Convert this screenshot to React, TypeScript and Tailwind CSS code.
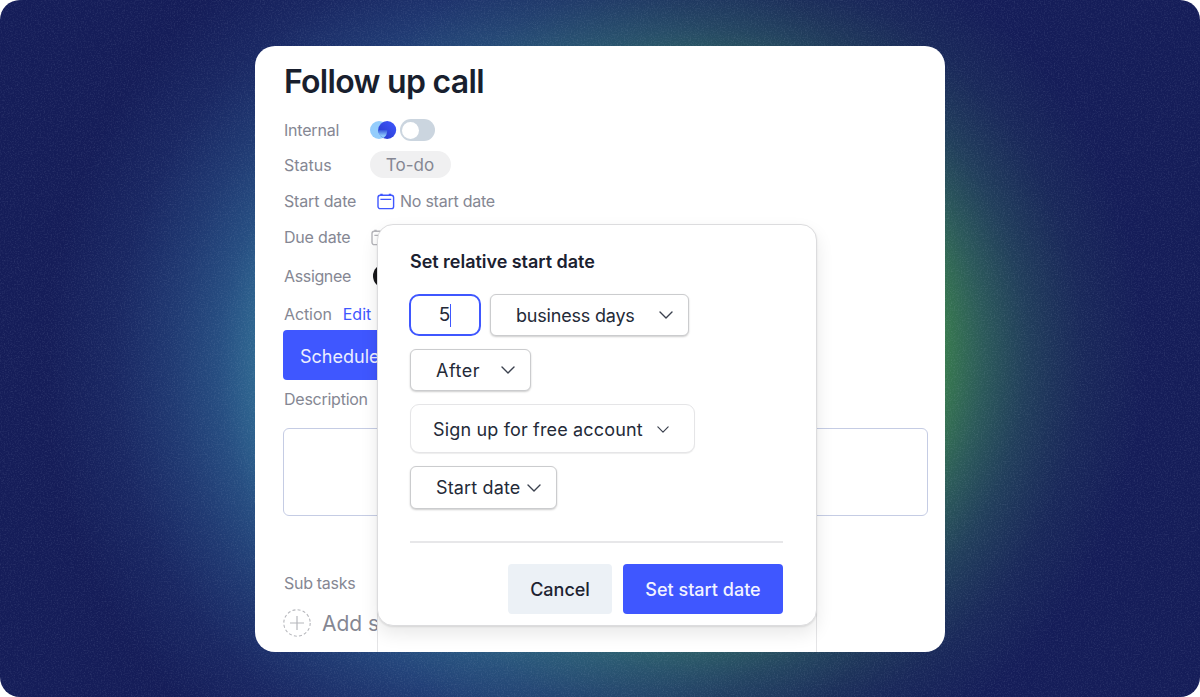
import React from 'react';

interface SelectBoxProps {
  label: string;
  className: string;
  textClass: string;
  small?: boolean;
}

const Chevron: React.FC<{ small?: boolean }> = ({ small }) => (
  <svg width={small ? 12 : 14} height={small ? 7 : 8} viewBox="0 0 14 8" fill="none" className="shrink-0">
    <path d="M1 1l6 6 6-6" stroke="#3b414e" strokeWidth="1.4" strokeLinecap="round" strokeLinejoin="round" />
  </svg>
);

const SelectBox: React.FC<SelectBoxProps> = ({ label, className, textClass, small }) => (
  <button className={`flex items-center border whitespace-nowrap bg-white text-[#242a38] ${className}`}>
    <span className={`text-left ${textClass}`}>{label}</span>
    <Chevron small={small} />
  </button>
);

const CalendarIcon: React.FC<{ color: string }> = ({ color }) => (
  <svg width="18" height="17" viewBox="0 0 18 17" fill="none" stroke={color} className="shrink-0">
    <rect x="1" y="2.2" width="15.6" height="13.4" rx="2.2" strokeWidth="1.4" />
    <path d="M3.4 6.4h10.8" strokeWidth="1.3" />
    <path d="M4.5 .8v2M13 .8v2" strokeWidth="2.4" />
  </svg>
);

const BrandIcon: React.FC = () => (
  <svg width="27" height="20" viewBox="0 0 27 20" className="shrink-0">
    <defs>
      <linearGradient id="brandBlue" x1="0" y1="1" x2="1" y2="0">
        <stop offset="0" stopColor="#2638c8" />
        <stop offset="1" stopColor="#3f58ff" />
      </linearGradient>
      <linearGradient id="brandMix" x1="0" y1="0" x2="0" y2="1">
        <stop offset="0" stopColor="#3658dc" />
        <stop offset=".7" stopColor="#8bc6fb" />
      </linearGradient>
    </defs>
    <circle cx="9" cy="10" r="9" fill="#94cdfc" />
    <circle cx="17.2" cy="10" r="9" fill="url(#brandBlue)" />
    <path d="M8.2 10h9a9 9 0 0 1-3.8 8 9 9 0 0 1-5.2-8z" fill="url(#brandMix)" />
  </svg>
);

const Backdrop: React.FC = () => (
  <svg className="absolute inset-0 h-full w-full" viewBox="0 0 1200 697" preserveAspectRatio="none">
    <defs>
      <radialGradient id="glowBlue" gradientUnits="userSpaceOnUse" cx="0" cy="0" r="1" gradientTransform="translate(500 365) scale(455 480)">
        <stop offset="0" stopColor="#3a86b0" stopOpacity=".9" />
        <stop offset=".54" stopColor="#3a86a8" stopOpacity=".7" />
        <stop offset=".62" stopColor="#3a86b0" stopOpacity=".46" />
        <stop offset=".72" stopColor="#3a80b0" stopOpacity=".29" />
        <stop offset=".85" stopColor="#3a78b0" stopOpacity=".11" />
        <stop offset="1" stopColor="#3a78b0" stopOpacity="0" />
      </radialGradient>
      <radialGradient id="glowGreen" gradientUnits="userSpaceOnUse" cx="0" cy="0" r="1" gradientTransform="translate(710 352) scale(435 445)">
        <stop offset="0" stopColor="#46a04a" stopOpacity=".9" />
        <stop offset=".54" stopColor="#46a04a" stopOpacity=".7" />
        <stop offset=".63" stopColor="#42965a" stopOpacity=".5" />
        <stop offset=".73" stopColor="#3c8860" stopOpacity=".31" />
        <stop offset=".86" stopColor="#387860" stopOpacity=".12" />
        <stop offset="1" stopColor="#387860" stopOpacity="0" />
      </radialGradient>
      <filter id="grain" x="0" y="0" width="100%" height="100%">
        <feTurbulence type="fractalNoise" baseFrequency=".7" numOctaves="2" seed="4" />
        <feColorMatrix values="0 0 0 0 .6  0 0 0 0 .7  0 0 0 0 .85  1.6 0 0 0 -.72" />
      </filter>
    </defs>
    <rect width="1200" height="697" fill="#151d59" />
    <rect width="1200" height="697" fill="url(#glowBlue)" />
    <rect width="1200" height="697" fill="url(#glowGreen)" />
    <rect width="1200" height="697" filter="url(#grain)" opacity=".16" />
  </svg>
);

const DatePopover: React.FC = () => (
  <div className="absolute left-[122px] top-[178px] flex h-[402px] w-[440px] flex-col rounded-[16px] border border-[#dcdcde] bg-white px-8 pt-[25px] shadow-[0_8px_18px_rgba(0,0,0,0.09),0_1px_2px_rgba(0,0,0,0.1)]">
    <h2 className="h-6 text-[18px] leading-6 font-semibold tracking-[-0.03px] whitespace-nowrap text-[#1b2130]">Set relative start date</h2>

    <div className="-ml-px mt-5 flex items-start gap-[10px]">
      <div className="flex h-[42px] w-[72px] items-center justify-center rounded-[10px] border-[2.5px] border-[#3f57ff] text-[19px] text-[#242a38]">
        <span>5</span>
        <span className="h-[23px] w-px bg-[#3f57ff]" />
      </div>
      <SelectBox
        label="business days"
        className="-ml-px h-[42px] w-[199px] rounded-md border-[#cbccce] pl-[25px] shadow-[0_1px_2px_rgba(0,0,0,0.2)]"
        textClass="w-[143px] text-[18px] tracking-[-0.2px]"
      />
    </div>
    <SelectBox
      label="After"
      className="mt-[13px] h-[42px] w-[121px] rounded-md border-[#cbccce] pl-[25px] shadow-[0_1px_2px_rgba(0,0,0,0.2)]"
      textClass="w-[65px] text-[18px] tracking-[0.5px]"
    />
    <SelectBox
      label="Sign up for free account"
      className="mt-[13px] h-[49px] w-[285px] rounded-[9px] border-[#e5e5e7] pt-px pl-[22px] shadow-[0_1px_1px_rgba(0,0,0,0.07)]"
      textClass="w-[224px] text-[18px] tracking-[0.16px]"
      small
    />
    <SelectBox
      label="Start date"
      className="mt-[13px] h-[43px] w-[147px] rounded-md border-[#cbccce] pl-[25px] shadow-[0_1px_2px_rgba(0,0,0,0.2)]"
      textClass="w-[91px] text-[18px] tracking-[0.15px]"
    />

    <div className="mt-8 mr-px border-t-2 border-[#e7e7e9]" />
    <div className="mr-px mt-[21px] flex justify-end gap-[11px] text-[18px] font-medium">
      <button className="h-[50px] w-[104px] rounded bg-[#ecf1f6] text-[#1d2331]">Cancel</button>
      <button className="h-[50px] w-[160px] rounded bg-[#3f57ff] whitespace-nowrap text-[#f2f3ff]">Set start date</button>
    </div>
  </div>
);

const TaskCard: React.FC = () => (
  <main className="relative flex h-[606px] w-[690px] flex-col overflow-hidden rounded-[20px] bg-white pr-[17px] pl-7 text-[16px] text-[#858793]">
    <h1 className="flex h-[70px] shrink-0 items-center pt-px pl-px text-[32px] font-semibold tracking-[-0.7px] text-[#191f2e]">Follow up call</h1>

    <div className="flex h-7 items-center">
      <span className="w-[87px] pl-px tracking-[-0.2px]">Internal</span>
      <BrandIcon />
      <span className="ml-[3px] flex h-[22px] w-[35px] items-center rounded-full bg-[#cbd5df] pl-[2px]">
        <span className="h-[17px] w-[17px] rounded-full bg-white" />
      </span>
    </div>
    <div className="flex h-[42px] items-center">
      <span className="w-[87px] pl-px">Status</span>
      <span className="-mt-px flex h-[27px] w-[81px] items-center justify-center rounded-full bg-[#f0f0f1] pt-[2px] pr-px text-[17px]">To-do</span>
    </div>
    <div className="flex h-[30px] items-center">
      <span className="w-[94px] pl-px tracking-[-0.15px]">Start date</span>
      <CalendarIcon color="#3f57ff" />
      <span className="ml-[5px] tracking-[-0.25px]">No start date</span>
    </div>
    <div className="flex h-[42px] items-center">
      <span className="w-[88px] pl-px tracking-[-0.2px]">Due date</span>
      <CalendarIcon color="#b5b5ba" />
    </div>
    <div className="flex h-[35px] items-center">
      <span className="w-[90px] pl-px tracking-[-0.35px]">Assignee</span>
      <span className="h-6 w-6 rounded-full bg-[#17171a]" />
    </div>
    <div className="flex h-[37px] items-center gap-[11px] pt-[5px] pl-px">
      <span className="tracking-[-0.1px]">Action</span>
      <a className="text-[#3f57ff]">Edit</a>
    </div>

    <button className="h-[50px] w-[150px] shrink-0 rounded bg-[#3f57ff] pt-[2px] pl-[17px] text-left text-[18px] text-[#eceeff]">Schedule</button>
    <div className="flex h-[38px] shrink-0 items-center pl-px tracking-[-0.25px]">Description</div>
    <div className="mt-[10px] h-[88px] shrink-0 rounded-md border border-[#c5cce4]" />

    <div className="mt-[55px] flex h-6 items-center pl-px tracking-[-0.3px]">Sub tasks</div>
    <div className="mt-3 flex items-center gap-[11px]">
      <svg width="28" height="28" viewBox="0 0 28 28" fill="none" stroke="#b6b7bc">
        <circle cx="14" cy="14" r="13.2" strokeDasharray="3 2.2" strokeWidth="1.1" />
        <path d="M14 7v14M7 14h14" strokeWidth="1.2" />
      </svg>
      <span className="pt-px text-[21px]">Add s</span>
    </div>

    {/* lower edge of the panel that continues under the popover */}
    <div className="absolute bottom-0 left-[122px] h-[60px] w-[440px] border-x border-[#e4e4e6] bg-white" />
    <DatePopover />
  </main>
);

export default function App() {
  return (
    <div className="h-[697px] w-[1200px] bg-white font-[Inter,sans-serif]">
      <div className="relative flex h-full w-full justify-center overflow-hidden rounded-[20px] pt-[46px]">
        <Backdrop />
        <TaskCard />
      </div>
    </div>
  );
}
